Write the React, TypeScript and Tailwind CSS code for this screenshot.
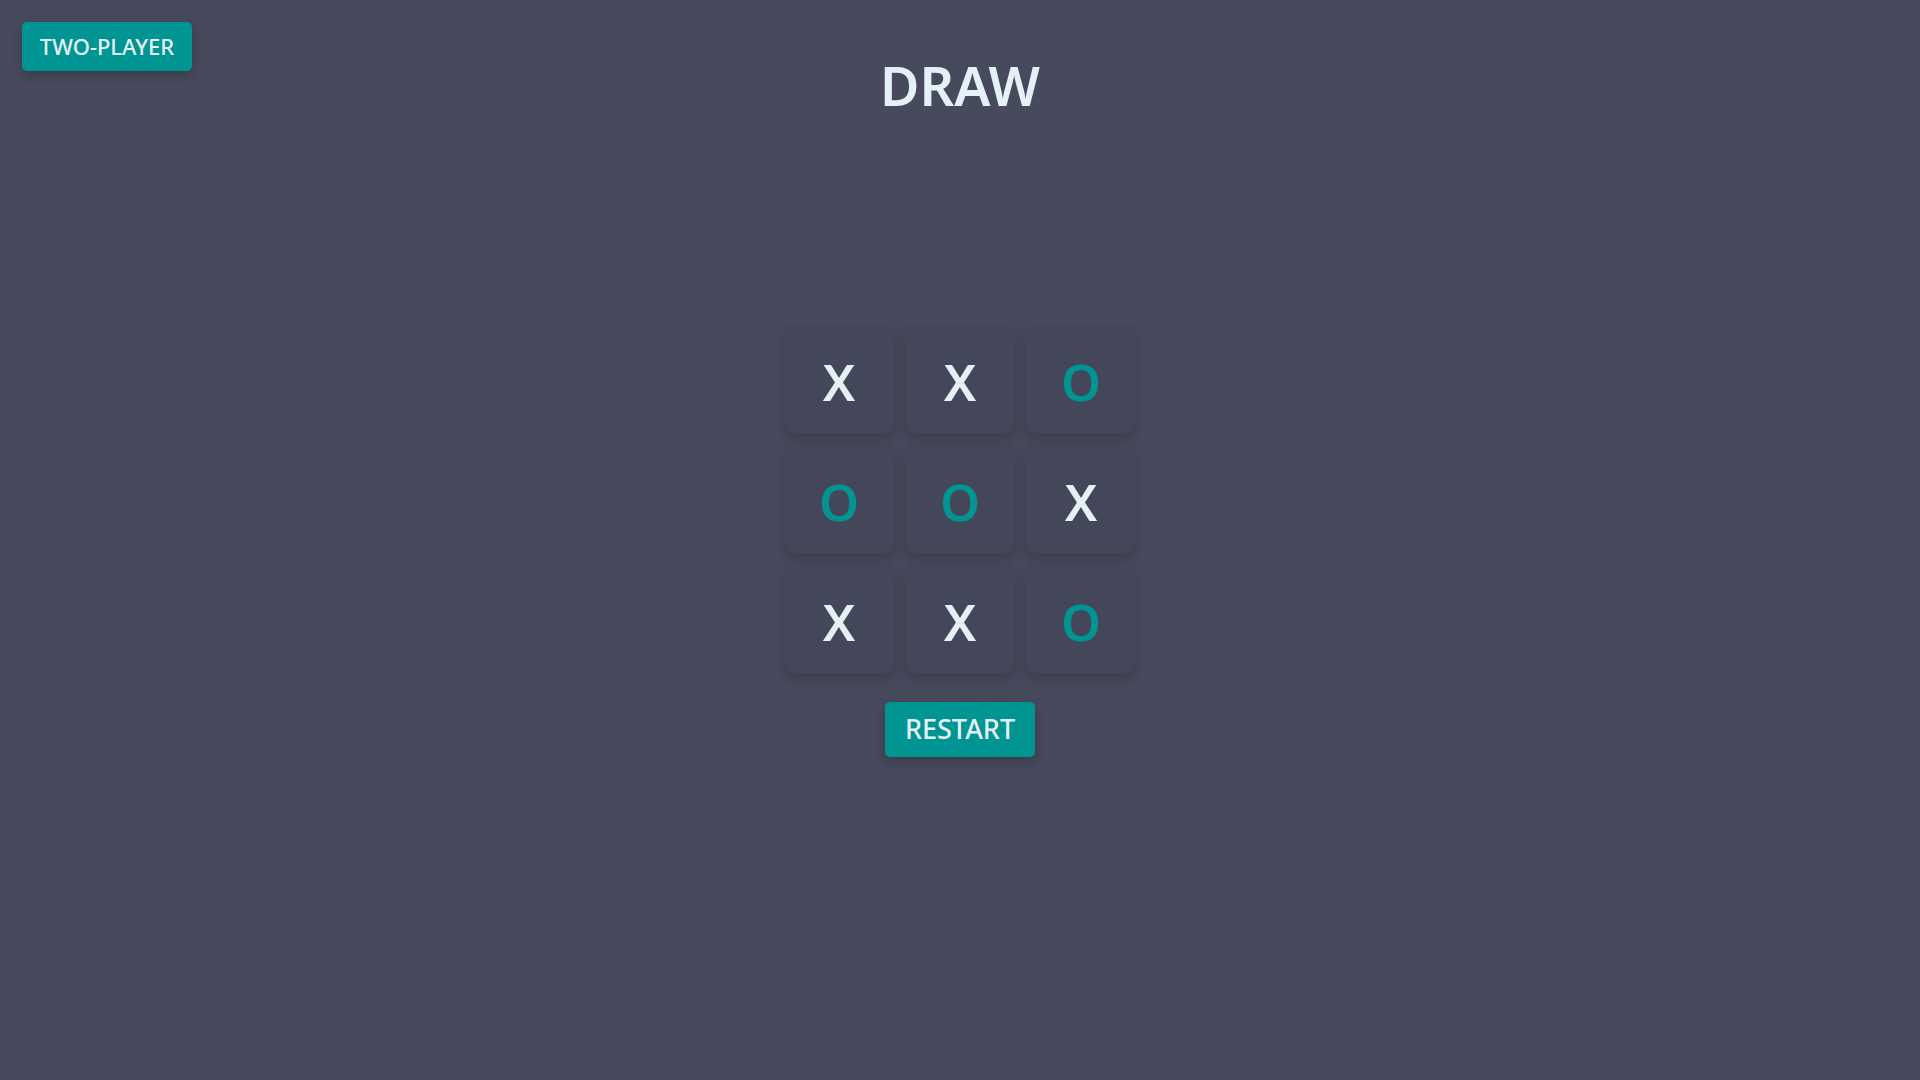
import React from 'react';

type Mark = 'X' | 'O';

const board: Mark[] = ['X', 'X', 'O', 'O', 'O', 'X', 'X', 'X', 'O'];

export default function App() {
    return (
        <div className="min-h-screen bg-[#464a5c] px-[22px] pt-[22px] font-['Noto_Sans',sans-serif] text-[#e4f2f8]">
            {/* Header: mode button + status */}
            <div className="grid grid-cols-[1fr_auto_1fr] items-start">
                <div>
                    <button className="flex h-[49px] w-[170px] items-center justify-center rounded-[5px] bg-[#009592] text-[22px] font-medium shadow-[0_4px_12px_rgba(0,0,0,0.22)]">
                        TWO-PLAYER
                    </button>
                </div>
                <h1 className="mt-[36px] text-[54px] font-semibold leading-none">DRAW</h1>
                <div />
            </div>

            {/* Board */}
            <div className="mt-[213px] flex flex-col items-center">
                <div className="grid grid-cols-[110px_110px_110px] gap-x-[11px] gap-y-[12px]">
                    {board.map((mark, index) => (
                        <div
                            key={index}
                            className="flex h-[108px] w-[110px] items-center justify-center rounded-[10px] bg-[#444659] pt-[5px] shadow-[0_6px_12px_rgba(0,0,0,0.16)]"
                        >
                            <span
                                className={
                                    mark === 'X'
                                        ? 'text-[51px] font-semibold leading-none text-[#e4f2f8]'
                                        : 'text-[51px] font-semibold leading-none text-[#009592]'
                                }
                            >
                                {mark}
                            </span>
                        </div>
                    ))}
                </div>

                <button className="mt-[29px] flex h-[55px] w-[150px] items-center justify-center rounded-[5px] bg-[#009592] text-[27px] font-medium shadow-[0_4px_12px_rgba(0,0,0,0.22)]">
                    RESTART
                </button>
            </div>
        </div>
    );
}
